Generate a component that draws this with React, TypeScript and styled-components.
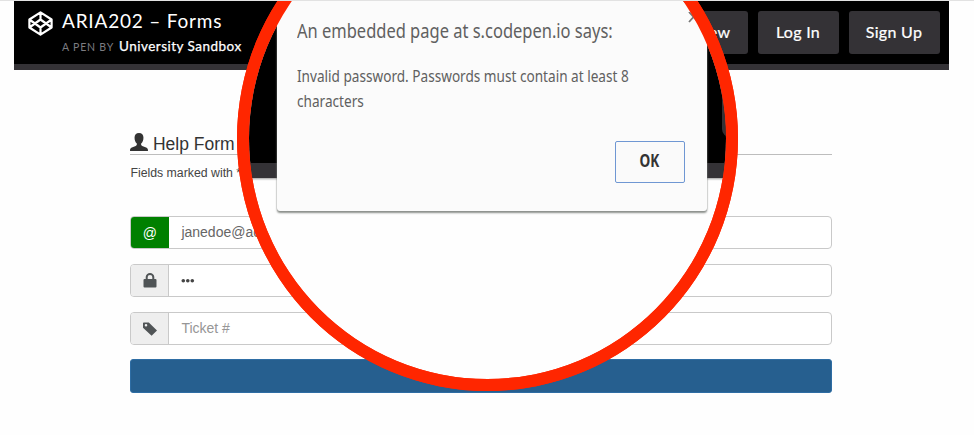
import React from "react";
import styled, { createGlobalStyle } from "styled-components";

const GlobalStyle = createGlobalStyle`
  * { box-sizing: border-box; }
  body { margin: 0; background: #fff; overflow: hidden; }
`;

const Page = styled.div`
  position: relative;
  width: 974px;
  height: 435px;
  overflow: hidden;
  background: #fefefe;
  border-top: 1px solid #e2e2e2;
  font-family: "Liberation Sans", Arial, sans-serif;
`;

const Header = styled.header`
  display: flex;
  justify-content: space-between;
  width: 935.5px;
  height: 69px;
  margin-left: 13.5px;
  padding: 10px 9.5px 0 14.5px;
  background: #000;
  border-bottom: 6px solid #343236;
  color: #fff;
  font-family: Lato, sans-serif;
`;

const Brand = styled.div`
  display: flex;
  gap: 9px;
`;

const Logo = styled.svg`
  width: 25px;
  height: 25px;
`;

const Title = styled.h1`
  margin: -3px 0 0;
  font-size: 19px;
  line-height: 25px;
  font-weight: 400;
  letter-spacing: 0.8px;
  white-space: nowrap;
`;

const Byline = styled.div`
  margin-top: 1px;
  font-size: 13.5px;
  line-height: 24px;
  font-weight: 400;
  letter-spacing: 0.48px;
  -webkit-text-stroke: 0.25px #fff;
  white-space: nowrap;
`;

const Muted = styled.span`
  margin-right: 5px;
  color: #7c7c80;
  font-size: 10.5px;
  letter-spacing: 0.8px;
  -webkit-text-stroke: 0;
`;

const Actions = styled.nav`
  display: flex;
  gap: 10px;
`;

const NavButton = styled.button<{ $width: number }>`
  width: ${(p) => p.$width}px;
  height: 43px;
  padding: 0;
  border: 0;
  border-radius: 3px;
  background: #343236;
  color: #fff;
  font: 400 16px/42px Lato, sans-serif;
  letter-spacing: 0.3px;
  -webkit-text-stroke: 0.22px #fff;
`;

const ButtonLabel = styled.span`
  position: relative;
  top: -1px;
`;

const Form = styled.form`
  width: 702px;
  margin: 62px 0 0 130.4px;
`;

const Legend = styled.div`
  display: flex;
  gap: 4.5px;
  height: 23px;
  border-bottom: 1px solid #bdbdbd;
  color: #333;
  font-size: 17.5px;
  line-height: 24px;
`;

const Person = styled.svg`
  width: 18px;
  height: 18px;
  margin-top: 1px;
`;

const Note = styled.p`
  margin: 8px 0 33px;
  color: #444;
  font-size: 12.3px;
  line-height: 20px;
`;

const Field = styled.div`
  display: flex;
  height: 33px;
  margin-bottom: 15px;
  border: 1px solid #c9c9c9;
  border-radius: 4px;
  overflow: hidden;
  background: #fff;
`;

const Addon = styled.span<{ $valid?: boolean }>`
  display: flex;
  align-items: center;
  justify-content: center;
  width: 38px;
  flex: none;
  background: ${(p) => (p.$valid ? "#008000" : "#eee")};
  border-right: 1px solid ${(p) => (p.$valid ? "#008000" : "#c9c9c9")};
  color: ${(p) => (p.$valid ? "#fff" : "#505456")};
  font-size: 14px;
`;

const Value = styled.span<{ $placeholder?: boolean }>`
  padding-left: 12px;
  color: ${(p) => (p.$placeholder ? "#969696" : "#666")};
  font-size: 14px;
  line-height: 31px;
`;

const Dots = styled.svg`
  width: 15px;
  height: 31px;
  margin-left: 12px;
`;

const Submit = styled.button`
  display: block;
  width: 702px;
  height: 34px;
  margin-top: -1px;
  border: 1px solid #2e6da4;
  border-radius: 3px;
  background: #265f8f;
`;

const Lens = styled.div`
  position: absolute;
  left: 237px;
  top: -115px;
  width: 501px;
  height: 505px;
  border: 12.4px solid #ff2600;
  border-radius: 50%;
  overflow: hidden;
  background: #fefefe;
`;

const ZoomedHeader = styled.div`
  position: relative;
  display: flex;
  justify-content: center;
  width: 477px;
  height: 280px;
  background: #000;
  border-bottom: 15px solid #343236;
  box-shadow: 0 1px 2px #999;
`;

const ZoomedButton = styled.div`
  position: absolute;
  right: -41px;
  bottom: 26px;
  width: 45px;
  height: 112px;
  border-radius: 8px;
  background: #343236;
`;

const Dialog = styled.section`
  position: absolute;
  left: 277px;
  top: 0;
  width: 430px;
  height: 210px;
  padding: 17px 22px 0 20px;
  background: #fbfbfb;
  border-radius: 0 0 3px 3px;
  box-shadow: 0 2px 2px #8c908c, 0 0 1px #555;
  color: #606060;
  font-family: "Noto Sans", "Open Sans", sans-serif;
  clip-path: path("M15 -2 Q6 9 -2 20 V218 H435 V35 Q420 14 404 -2 Z");
`;

const Heading = styled.h2`
  width: max-content;
  margin: 0;
  font-size: 20px;
  line-height: 26px;
  font-weight: 400;
  transform: scaleX(0.824);
  transform-origin: left;
`;

const Message = styled.p`
  width: max-content;
  margin: 19px 0 0;
  font-size: 17px;
  line-height: 25px;
  font-weight: 400;
  transform: scaleX(0.8);
  transform-origin: left;
`;

const Ok = styled.button`
  display: block;
  width: 70px;
  height: 42px;
  margin: 28px 0 0 auto;
  padding: 0 2px 0 0;
  border: 1px solid #6f97d3;
  border-radius: 2px;
  background: #fafafa;
  color: #333;
  font: 700 17px/38px "Noto Sans", sans-serif;
`;

const Narrow = styled.span`
  display: inline-block;
  transform: translateY(-1px) scaleX(0.8);
`;

const CloseIcon = styled.svg`
  position: absolute;
  left: 411px;
  top: 11px;
  width: 11px;
  height: 11px;
`;

const Ring = styled(Lens)`
  background: transparent;
`;

export default function App() {
  return (
    <>
      <GlobalStyle />
      <Page>
        <Header>
          <Brand>
            <Logo viewBox="0 0 25 25" fill="none" stroke="#fff" strokeWidth="2.2" strokeLinejoin="round">
              <path d="M12.5 1.4 23.6 8.5v8L12.5 23.6 1.4 16.5v-8ZM12.5 1.4v7M12.5 16.5v7M1.4 8.5l11.1 8 11.1-8M1.4 16.5l11.1-8 11.1 8" />
            </Logo>
            <div>
              <Title>ARIA202 – Forms</Title>
              <Byline><Muted>A PEN BY</Muted>University Sandbox</Byline>
            </div>
          </Brand>
          <Actions>
            <NavButton $width={130}><ButtonLabel>Change View</ButtonLabel></NavButton>
            <NavButton $width={81}><ButtonLabel>Log In</ButtonLabel></NavButton>
            <NavButton $width={91}><ButtonLabel>Sign Up</ButtonLabel></NavButton>
          </Actions>
        </Header>

        <Form>
          <Legend>
            <Person viewBox="0 0 19 18" preserveAspectRatio="none" fill="#333">
              <path d="M9.5 0C6.4 0 4.8 1.8 4.8 4.6c0 2.7.8 4.7 2.4 6 .2 1.1-.2 1.8-1.2 2.3L2 14.6C.5 15.2 0 16 0 18h19c0-2-.5-2.8-2-3.4l-4.1-1.7c-1-.5-1.4-1.2-1.1-2.3 1.6-1.3 2.4-3.3 2.4-6C14.2 1.8 12.6 0 9.5 0Z" />
            </Person>
            Help Form
          </Legend>
          <Note>Fields marked with * are required</Note>
          <Field>
            <Addon $valid>@</Addon>
            <Value>janedoe@acme.com</Value>
          </Field>
          <Field>
            <Addon>
              <svg width="14" height="15" viewBox="0 0 14 15">
                <path d="M3.7 7V4a3.3 3 0 0 1 6.6 0v3" fill="none" stroke="#505456" strokeWidth="2" />
                <rect x=".5" y="6" width="13" height="8.5" rx="1" fill="#505456" />
              </svg>
            </Addon>
            <Dots viewBox="0 0 15 31" fill="#444">
              <circle cx="2.3" cy="15.7" r="1.8" />
              <circle cx="6.8" cy="15.7" r="1.8" />
              <circle cx="11.3" cy="15.7" r="1.8" />
            </Dots>
          </Field>
          <Field>
            <Addon>
              <svg width="14" height="14" viewBox="0 0 14 14">
                <path fillRule="evenodd" d="M0 1.2Q0 .5.8.5h5L14 8.4 8.6 13.8 0 5.7ZM3 2a1.3 1.3 0 1 0 0 2.6A1.3 1.3 0 0 0 3 2Z" fill="#505456" />
              </svg>
            </Addon>
            <Value $placeholder>Ticket #</Value>
          </Field>
          <Submit type="button" aria-label="Submit" />
        </Form>

        <Lens>
          <ZoomedHeader><ZoomedButton /></ZoomedHeader>
        </Lens>
        <Dialog>
          <Heading>An embedded page at s.codepen.io says:</Heading>
          <Message>Invalid password. Passwords must contain at least 8<br />characters</Message>
          <Ok><Narrow>OK</Narrow></Ok>
          <CloseIcon viewBox="0 0 11 11" stroke="#777" strokeWidth="1.8">
            <path d="M1 0 10 10M10 0 1 10" />
          </CloseIcon>
        </Dialog>
        <Ring />
      </Page>
    </>
  );
}
